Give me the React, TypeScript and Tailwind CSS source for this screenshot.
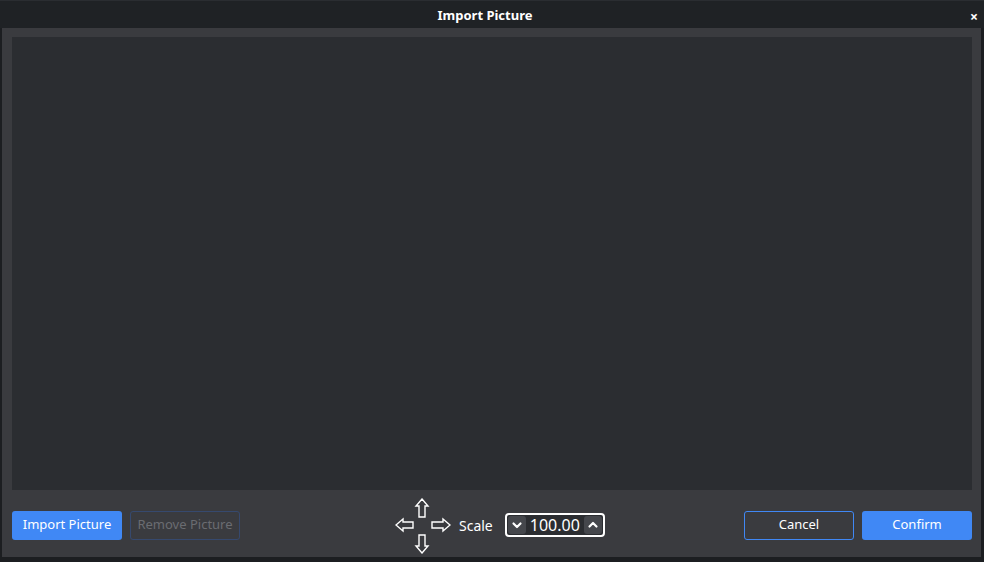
import React from "react";

function MoveArrows() {
  return (
    <svg width="56" height="56" viewBox="0 0 56 56" fill="none" stroke="white" strokeWidth="1.4" strokeLinejoin="miter">
      {/* up */}
      <path d="M27 1 L33 8 L30 8 L30 19 L24 19 L24 8 L21 8 Z" />
      {/* down */}
      <path d="M27 55 L33 48 L30 48 L30 37 L24 37 L24 48 L21 48 Z" />
      {/* left */}
      <path d="M1 27 L8 21 L8 24 L18 24 L18 30 L8 30 L8 33 Z" />
      {/* right */}
      <path d="M55 27 L48 21 L48 24 L37 24 L37 30 L48 30 L48 33 Z" />
    </svg>
  );
}

function Chevron({ up }: { up?: boolean }) {
  return (
    <svg width="12" height="12" viewBox="0 0 12 12" fill="none" stroke="white" strokeWidth="2.2" strokeLinecap="round" strokeLinejoin="round">
      {up ? <path d="M2.5 7.5 L6 4 L9.5 7.5" /> : <path d="M2.5 4.5 L6 8 L9.5 4.5" />}
    </svg>
  );
}

export default function App() {
  return (
    <div
      className="flex h-[562px] w-[984px] flex-col bg-[#1c1e21] text-white"
      style={{ fontFamily: '"Noto Sans", "Open Sans", sans-serif' }}
    >
      <div className="relative flex h-[28px] items-center justify-center border-t border-[#2a2d31] bg-[#1f2225] pr-[14px] pt-[2px]">
        <span className="text-[13px] font-bold">Import Picture</span>
        <span className="absolute right-[6px] top-[9px] text-[14px] font-bold leading-none">×</span>
      </div>
      <div className="ml-[2px] mr-[3px] flex h-[529px] flex-col bg-[#3a3b3f] pl-[10px] pr-[9px] pt-[9px]">
        <div className="h-[453px] bg-[#2b2d31]" />
        <div className="flex flex-1 items-center pt-[3px]">
          <div className="flex items-center gap-[8px]">
            <button className="h-[29px] w-[110px] rounded-[3px] bg-[#4088f5] text-[13px] text-white">
              Import Picture
            </button>
            <button className="h-[29px] w-[110px] rounded-[3px] border border-[#36496e] text-[13px] text-[#6a6c71]">
              Remove Picture
            </button>
          </div>
          <div className="ml-[155px] flex items-center">
            <div className="mt-[1px]">
              <MoveArrows />
            </div>
            <span className="ml-[8px] text-[14px]">Scale</span>
            <div className="ml-[12px] flex h-[24px] w-[100px] items-center justify-between rounded-[4px] border-2 border-white bg-[#2b2d31] px-[1px]">
              <div className="flex h-[18px] w-[18px] items-center justify-center rounded-[3px] bg-[#45474c]">
                <Chevron />
              </div>
              <span className="text-[16px] leading-none">100.00</span>
              <div className="flex h-[18px] w-[18px] items-center justify-center rounded-[3px] bg-[#45474c]">
                <Chevron up />
              </div>
            </div>
          </div>
          <div className="ml-auto flex items-center gap-[8px]">
            <button className="h-[29px] w-[110px] rounded-[3px] border border-[#4088f5] text-[13px] text-white">
              Cancel
            </button>
            <button className="h-[29px] w-[110px] rounded-[3px] bg-[#4088f5] text-[13px] text-white">
              Confirm
            </button>
          </div>
        </div>
      </div>
    </div>
  );
}
